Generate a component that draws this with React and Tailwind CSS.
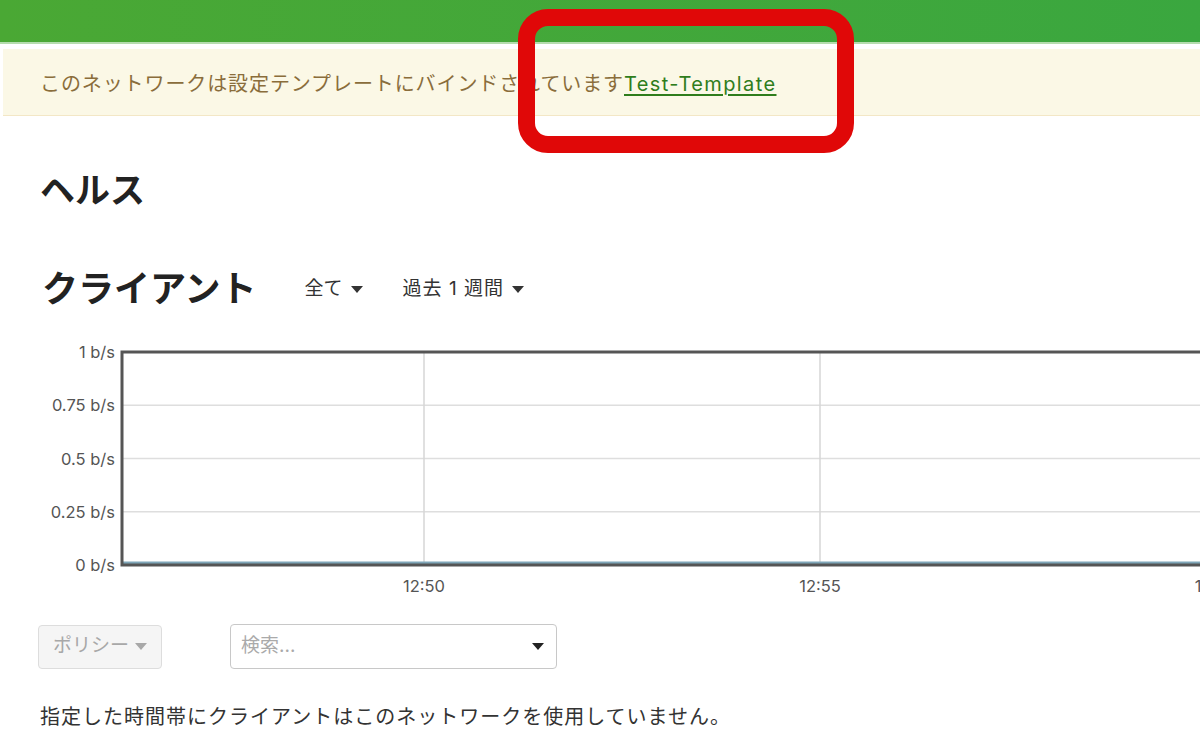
const jp = { fontFamily: 'Inter, "Noto Sans CJK JP", "Noto Sans", sans-serif' };

function Caret({ className = "" }) {
  return (
    <svg width="12" height="7" viewBox="0 0 12 7" className={className}>
      <path d="M0 0h12L6 7z" fill="currentColor" />
    </svg>
  );
}

function ClientChart() {
  const left = 122;
  const top = 11;
  const bottom = 224;
  const yTicks = [
    ["1 b/s", 0],
    ["0.75 b/s", 0.25],
    ["0.5 b/s", 0.5],
    ["0.25 b/s", 0.75],
    ["0 b/s", 1],
  ];
  const xTicks = [
    ["12:50", 424],
    ["12:55", 820],
    ["13:00", 1216],
  ];
  const h = bottom - top;
  return (
    <svg width="1200" height="262" className="block" style={{ fontFamily: 'Inter, "Noto Sans", sans-serif' }}>
      {yTicks.slice(1, 4).map(([, f]) => (
        <line key={f} x1={left} x2="1200" y1={top + h * f} y2={top + h * f} stroke="#dedede" strokeWidth="1.5" />
      ))}
      {xTicks.map(([, x]) => (
        <line key={x} x1={x} x2={x} y1={top} y2={bottom} stroke="#d6d6d6" strokeWidth="1.5" />
      ))}
      <line x1={left} x2="1200" y1={bottom - 2} y2={bottom - 2} stroke="#7fa6b8" strokeWidth="3" />
      <path d={`M1202 ${top} H${left} V${bottom} H1202`} fill="none" stroke="#555" strokeWidth="3" />
      {yTicks.map(([label, f]) => (
        <text key={label} x="115" y={top + h * f + 6} textAnchor="end" fontSize="16.5" fill="#555">
          {label}
        </text>
      ))}
      {xTicks.map(([label, x]) => (
        <text key={label} x={x} y="251" textAnchor="middle" fontSize="16.5" fill="#555">
          {label}
        </text>
      ))}
    </svg>
  );
}

export default function App() {
  return (
    <div className="relative h-[754px] w-[1200px] overflow-hidden bg-white text-[#333]" style={jp}>
      <div className="h-[42px] bg-gradient-to-r from-[#4aa834] to-[#3aa73f]" />
      <div className="h-[2px] bg-[#b5dcae]" />

      <div className="ml-[3px] mt-[5px] flex h-[67px] items-center border-b border-[#f3e7c6] bg-[#fbf8e6] pl-[37px] pt-[3px] text-[20px] text-[#8a6d3b]">
        <span className="tracking-[0.9px]">このネットワークは設定テンプレートにバインドされています</span>
        <a href="#" className="tracking-[1.4px] text-[#2f7d1c] underline underline-offset-[3px]">
          Test-Template
        </a>
      </div>

      <h1 className="mt-[52px] pl-[40px] text-[35px] font-bold leading-[44px] text-[#222]">ヘルス</h1>

      <div className="mt-[54px] flex items-center pl-[42px]">
        <h2 className="text-[36px] font-bold leading-[46px] text-[#222]">クライアント</h2>
        <button className="ml-[48px] flex items-center gap-[8px] text-[19px] text-[#333]">
          全て
          <Caret />
        </button>
        <button className="ml-[40px] flex items-center gap-[8px] text-[19px] tracking-[1px] text-[#333]">
          過去 1 週間
          <Caret />
        </button>
      </div>

      <div className="mt-[29px]">
        <ClientChart />
      </div>

      <div className="mt-[21px] flex items-center pl-[38px]">
        <button
          disabled
          className="flex h-[44px] w-[124px] items-center justify-center gap-[6px] rounded border border-[#ddd] bg-[#f5f5f5] text-[19px] text-[#a8a8a8]"
        >
          ポリシー
          <Caret className="text-[#a8a8a8]" />
        </button>
        <div className="ml-[68px] flex h-[45px] w-[327px] items-center justify-between rounded border border-[#c8c8c8] px-[10px] text-[19px]">
          <span className="text-[#aaa]">検索...</span>
          <Caret className="mr-[2px] text-[#222]" />
        </div>
      </div>

      <p className="mt-[33px] pl-[40px] text-[20px] tracking-[1px] text-[#333]">
        指定した時間帯にクライアントはこのネットワークを使用していません。
      </p>

      <div className="pointer-events-none absolute left-[518px] top-[9px] h-[144px] w-[336px] rounded-[30px] border-[17px] border-[#e00808]" />
    </div>
  );
}
